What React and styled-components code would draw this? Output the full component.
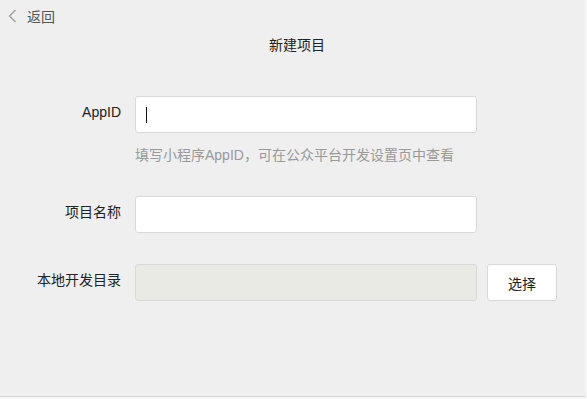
import React from "react";
import styled, { createGlobalStyle } from "styled-components";

const GlobalStyle = createGlobalStyle`
  html, body {
    margin: 0;
    padding: 0;
    background: #f6f6f6;
  }
  body {
    font-family: "Liberation Sans", "Noto Sans CJK SC", sans-serif;
  }
`;

const Window = styled.div`
  width: 585px;
  height: 396px;
  background: #efefef;
  border-bottom: 1px solid #d5d5d5;
  display: flex;
  flex-direction: column;
  color: #333;
`;

const TopBar = styled.div`
  display: flex;
  align-items: center;
  gap: 10px;
  height: 22px;
  padding: 5px 0 0 8px;
  color: #555;
  font-size: 14px;
  cursor: pointer;
`;

const Title = styled.div`
  text-align: center;
  font-size: 14px;
  color: #222;
  margin-top: 9px;
  padding-left: 9px;
  line-height: 18px;
`;

const Form = styled.div`
  display: flex;
  flex-direction: column;
  margin-top: 42px;
`;

const Row = styled.div`
  display: grid;
  grid-template-columns: 121px 342px auto;
  column-gap: 14px;
  align-items: start;
  margin-top: ${({ $gap }) => $gap || 0}px;
`;

const Label = styled.label`
  text-align: right;
  font-size: 14px;
  line-height: 18px;
  color: #222;
  padding-top: 7px;
`;

const Input = styled.div`
  box-sizing: border-box;
  height: 37px;
  border: 1px solid #d9d9d9;
  border-radius: 3px;
  background: ${({ $disabled }) => ($disabled ? "#eaeae4" : "#fff")};
  display: flex;
  align-items: center;
  padding-left: 10px;
`;

const Caret = styled.span`
  width: 1px;
  height: 16px;
  background: #111;
`;

const Hint = styled.div`
  grid-column: 2 / 4;
  font-size: 14px;
  line-height: 18px;
  color: #999;
  margin-top: 13px;
`;

const SelectButton = styled.button`
  box-sizing: border-box;
  width: 70px;
  height: 37px;
  margin-left: -4px;
  border: 1px solid #d9d9d9;
  border-radius: 3px;
  background: #fff;
  font-family: inherit;
  font-size: 14px;
  color: #222;
  cursor: pointer;
`;

const Back = () => (
  <svg width="9" height="14" viewBox="0 0 9 14" fill="none">
    <path d="M7.5 1 L1.5 7 L7.5 13" stroke="#9a9a9a" strokeWidth="1.2" />
  </svg>
);

export default function App() {
  return (
    <>
      <GlobalStyle />
      <Window>
        <TopBar>
          <Back />
          <span>返回</span>
        </TopBar>
        <Title>新建项目</Title>
        <Form>
          <Row>
            <Label>AppID</Label>
            <Input>
              <Caret />
            </Input>
            <span />
            <span />
            <Hint>填写小程序AppID，可在公众平台开发设置页中查看</Hint>
          </Row>
          <Row $gap={32}>
            <Label>项目名称</Label>
            <Input />
          </Row>
          <Row $gap={31}>
            <Label>本地开发目录</Label>
            <Input $disabled />
            <SelectButton>选择</SelectButton>
          </Row>
        </Form>
      </Window>
    </>
  );
}
